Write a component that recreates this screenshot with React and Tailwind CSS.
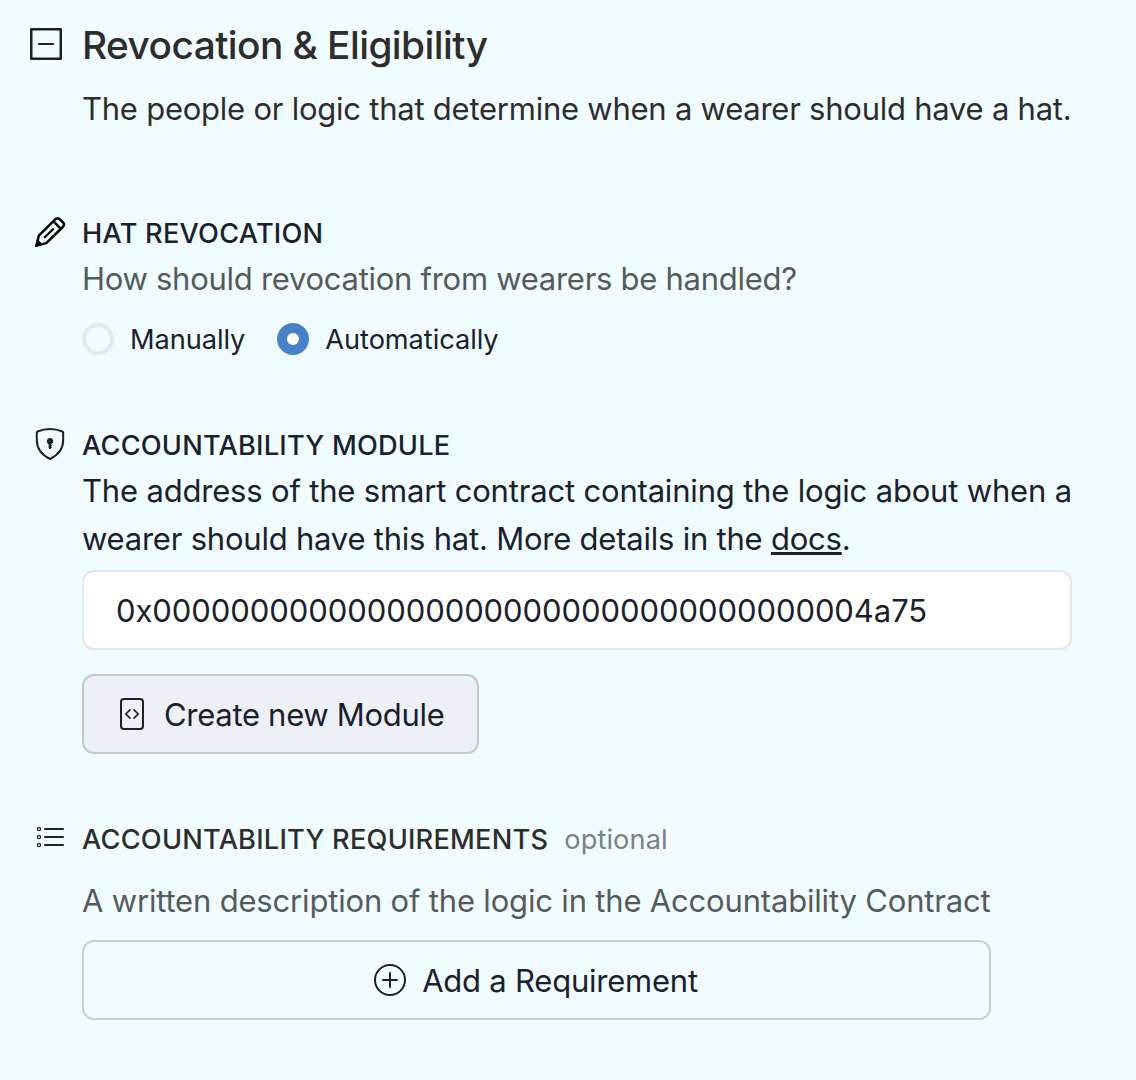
import React from "react";

function MinusSquare() {
  return (
    <svg className="block h-8 w-8" viewBox="0 0 32 32" fill="none" stroke="#1a202c">
      <rect x="1.25" y="1.25" width="29.5" height="29.5" strokeWidth="2.5" strokeLinejoin="round" />
      <path d="M9 16h14" strokeWidth="2.2" strokeLinecap="round" />
    </svg>
  );
}

function Pencil() {
  return (
    <svg className="block h-8 w-8" viewBox="0 0 32 32" fill="none" stroke="#000" strokeWidth="2.5" strokeLinejoin="round" strokeLinecap="round">
      <path d="M2.4 29.6 4.8 19.7 21.2 3.4Q23.4 1.2 25.6 3.1L29 6.4Q31 8.7 28.8 11L12.3 27.1Z" />
      <path d="M19.5 5.4 26.9 12.8" />
      <path d="M19 13.2 10.8 21.2" strokeWidth="2.3" />
      <path d="M2 30 3.6 23.8 8.2 28.4Z" fill="#000" strokeWidth="1" />
    </svg>
  );
}

function ShieldKeyhole() {
  return (
    <svg className="block h-8 w-8" viewBox="0 0 32 32" fill="none" stroke="#1a202c" strokeWidth="2" strokeLinejoin="round">
      <path d="M16 1C11.5 1 7 2 3.6 3.5 2.8 3.9 2.8 4.5 2.8 5.2V12C2.8 20.8 7.8 27 16 31 24.2 27 29.2 20.8 29.2 12V5.2C29.2 4.5 29.2 3.9 28.4 3.5 25 2 20.5 1 16 1Z" />
      <path d="M16 10A3.1 3.1 0 0 1 17.2 16V20L16.4 21H15.2L14.6 20V15.9A3.1 3.1 0 0 1 16 10Z" fill="#1a202c" stroke="none" />
      <path d="M16 17.2h2M16 19.6h1.8" strokeWidth="1" />
    </svg>
  );
}

function FileCode() {
  return (
    <svg className="block h-8 w-8" viewBox="0 0 32 32" fill="none" stroke="#1a202c" strokeWidth="2">
      <rect x="5" y="1" width="22" height="30" rx="3" />
      <path d="M14 11.8 9.8 16l4.2 4.2M18 11.8l4.2 4.2-4.2 4.2" strokeWidth="1.7" strokeLinecap="round" strokeLinejoin="round" />
    </svg>
  );
}

function BulletList() {
  return (
    <svg className="block h-8 w-8" viewBox="0 0 32 32" fill="none" stroke="#1a202c">
      <path d="M11 7h18M11 15h18M11 23h18" strokeWidth="2" strokeLinecap="round" />
      <circle cx="5" cy="7" r="1.6" strokeWidth="1.2" />
      <circle cx="5" cy="15" r="1.6" strokeWidth="1.2" />
      <circle cx="5" cy="23" r="1.6" strokeWidth="1.2" />
    </svg>
  );
}

function PlusCircle() {
  return (
    <svg className="block h-8 w-8" viewBox="0 0 32 32" fill="none" stroke="#1a202c" strokeWidth="2" strokeLinecap="round">
      <circle cx="16" cy="16" r="15" />
      <path d="M16 9v14M9 16h14" />
    </svg>
  );
}

function Radio({ label, checked }) {
  return (
    <label className="flex h-[42px] items-center gap-4">
      <span
        className={
          checked
            ? "flex h-8 w-8 items-center justify-center rounded-full bg-[#4781c8]"
            : "h-8 w-8 rounded-full border-4 border-[#e2e8eb]"
        }
      >
        {checked && <span className="h-3 w-3 rounded-full bg-white" />}
      </span>
      <span className="pt-0.5 text-[27.2px] leading-[42px] tracking-[-0.06px] whitespace-nowrap">{label}</span>
    </label>
  );
}

export default function App() {
  return (
    <main className="h-[1080px] w-[1136px] overflow-hidden bg-[#f0fcff] font-['Inter',sans-serif] text-[31px] leading-[48px] text-[#1a202c]">
      <header className="flex pt-[21px] text-[#2d2d2d]">
        <div className="w-[82px] shrink-0 pt-[7px] pl-[30px]"><MinusSquare /></div>
        <div>
          <h1 className="text-[38.8px] leading-[48px] font-medium tracking-[-0.55px] whitespace-nowrap">Revocation &amp; Eligibility</h1>
          <p className="mt-4 tracking-[-0.24px] whitespace-nowrap">The people or logic that determine when a wearer should have a hat.</p>
        </div>
      </header>

      <section className="mt-[79px] flex">
        <div className="w-[82px] shrink-0 pt-1 pl-[34px]"><Pencil /></div>
        <div>
          <h2 className="pt-px text-[27.2px] leading-[42px] font-medium tracking-[0.23px] whitespace-nowrap">HAT REVOCATION</h2>
          <p className="tracking-[-0.28px] whitespace-nowrap text-[#555b5c]">How should revocation from wearers be handled?</p>
          <div className="mt-[15px] flex gap-8">
            <Radio label="Manually" />
            <Radio label="Automatically" checked />
          </div>
        </div>
      </section>

      <section className="mt-16 flex">
        <div className="w-[82px] shrink-0 pt-1 pl-[34px]"><ShieldKeyhole /></div>
        <div className="w-[990px]">
          <h2 className="pt-px text-[27.2px] leading-[42px] font-medium tracking-[0.21px] whitespace-nowrap">ACCOUNTABILITY MODULE</h2>
          <p className="tracking-[-0.18px] whitespace-nowrap">
            The address of the smart contract containing the logic about when a<br />
            <span className="tracking-[-0.22px]">wearer should have this hat. More details in the <a className="underline decoration-[3px] underline-offset-[2px]">docs</a>.</span>
          </p>
          <div className="mt-[7px] flex h-20 items-center rounded-xl border-2 border-[#e2e8f0] bg-white px-8 tracking-[-0.07px]">
            <span className="pt-px">0x0000000000000000000000000000000000004a75</span>
          </div>
          <button className="mt-6 flex h-20 w-[397px] items-center gap-4 rounded-xl border-2 border-[#c4c9cc] bg-[#edf0f6] pl-8 tracking-[-0.3px] whitespace-nowrap">
            <FileCode />
            <span className="pt-px">Create new Module</span>
          </button>
        </div>
      </section>

      <section className="mt-16 flex">
        <div className="w-[82px] shrink-0 pt-1 pl-[34px]"><BulletList /></div>
        <div className="w-[909px]">
          <div className="flex gap-4 pt-px text-[27.2px] leading-[42px] whitespace-nowrap">
            <h2 className="font-medium tracking-[0.22px] text-[#2d2d2d]">ACCOUNTABILITY REQUIREMENTS</h2>
            <span className="tracking-[0.1px] text-[#7a8283]">optional</span>
          </div>
          <p className="mt-4 tracking-[-0.18px] whitespace-nowrap text-[#555b5c]">A written description of the logic in the Accountability Contract</p>
          <button className="mt-[15px] flex h-20 w-full items-center justify-center gap-4 rounded-xl border-2 border-[#c5d0d2] pr-px tracking-[-0.23px] whitespace-nowrap">
            <PlusCircle />
            <span className="pt-px">Add a Requirement</span>
          </button>
        </div>
      </section>
    </main>
  );
}
